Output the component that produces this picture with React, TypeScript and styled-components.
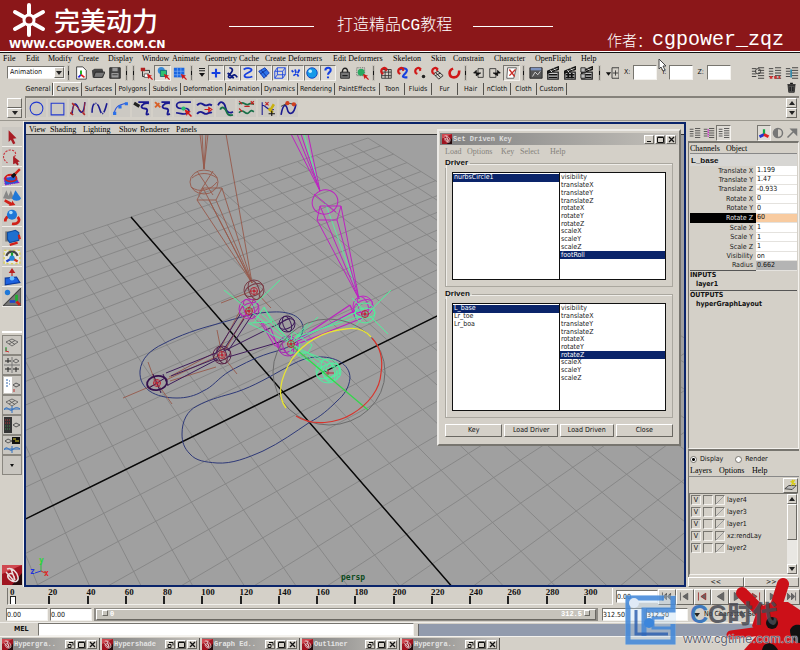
import React from "react";
import styled, { createGlobalStyle, css } from "styled-components";

const face = "#d4d0c8";
const navy = "#0a246a";
const ui = `"DejaVu Sans Condensed", "DejaVu Sans", "Liberation Sans", sans-serif`;
const serif = `"Liberation Serif", "DejaVu Serif", serif`;
const mono = `"Liberation Mono", monospace`;
const cjk = `"Noto Sans CJK SC", sans-serif`;

const Global = createGlobalStyle`
  * { box-sizing: border-box; }
  body { margin: 0; background: ${face}; }
  button, input, select { font: inherit; color: inherit; border-radius: 0; margin: 0; padding: 0; }
  svg { display: block; }
`;

const raised = css`
  border: 1px solid;
  border-color: #ffffff #6a6862 #6a6862 #ffffff;
`;
const sunken = css`
  border: 1px solid;
  border-color: #77756f #f4f2ee #f4f2ee #77756f;
`;

const Page = styled.div`
  position: relative;
  display: flex;
  flex-direction: column;
  height: 100vh;
  overflow: hidden;
  background: ${face};
  color: #111;
  font: 7px/9px ${ui};
`;

/* ---------- banner ---------- */
const Banner = styled.header`
  display: flex;
  align-items: center;
  height: 53px;
  flex: none;
  padding: 0 16px 0 9px;
  background: #8b1719;
  color: #fff;
  border-bottom: 1px solid #111;
  box-shadow: inset 0 -1px #fff;
`;
const Brand = styled.div`
  width: 156px;
  height: 50px;
`;
const BrandTop = styled.div`
  display: flex;
  align-items: center;
  gap: 8px;
  height: 38px;
  padding-left: 3px;
`;
const BrandName = styled.h1`
  margin: 0;
  font: 500 26px/32px ${cjk};
  white-space: nowrap;
`;
const BrandUrl = styled.div`
  font: 700 11px/11px "DejaVu Sans", sans-serif;
  white-space: nowrap;
`;
const Rule = styled.span<{ $w: number; $ml: number }>`
  height: 1px;
  width: ${(p) => p.$w}px;
  margin-left: ${(p) => p.$ml}px;
  background: #fff;
`;
const Slogan = styled.div`
  margin-left: 23px;
  font: 300 16px/20px "Liberation Mono", ${cjk};
  white-space: nowrap;
`;
const Author = styled.div`
  display: flex;
  align-items: center;
  align-self: flex-end;
  margin-left: auto;
  padding-bottom: 2px;
  font: 20px/20px ${mono};
  white-space: nowrap;
`;
const AuthorLabel = styled.span`
  font: 300 15px/20px ${cjk};
`;

/* ---------- menus and toolbars ---------- */
const MenuBar = styled.nav<{ $h?: number; $pl?: number; $faded?: boolean }>`
  display: flex;
  align-items: center;
  flex: none;
  height: ${(p) => p.$h ?? 11}px;
  padding-left: ${(p) => p.$pl ?? 3}px;
  font: 400 8px/9px ${serif};
  color: ${(p) => (p.$faded ? "#85827b" : "#000")};
`;
const MenuItem = styled.button<{ $w: number }>`
  flex: none;
  width: ${(p) => p.$w}px;
  border: 0;
  background: none;
  text-align: left;
  white-space: nowrap;
`;
const ToolBar = styled.div`
  display: flex;
  align-items: center;
  flex: none;
  height: 17px;
  padding: 0 0 0 7px;
`;
const Tool = styled.button<{ $on?: boolean; $w?: number }>`
  flex: none;
  display: grid;
  place-items: center;
  width: ${(p) => p.$w ?? 17}px;
  height: 16px;
  border: 0;
  background: none;
  ${(p) => p.$on && sunken}
  ${(p) => p.$on && "background: #dedbd5;"}
`;
const Divider = styled.span<{ $m?: number }>`
  flex: none;
  width: 1px;
  height: 14px;
  margin: 0 ${(p) => p.$m ?? 3}px;
  background: linear-gradient(#77756f 0 5px, #111 5px 9px, #77756f 9px);
  outline: 1px solid #c6c2ba;
`;
const SelectBox = styled.div`
  display: flex;
  width: 58px;
  height: 13px;
  ${sunken}
  background: #fff;
`;
const ModeSelect = styled.select`
  appearance: none;
  flex: 1;
  min-width: 0;
  padding-left: 2px;
  border: 0;
  background: none;
`;
const AxisLabel = styled.label`
  display: flex;
  align-items: center;
  gap: 3px;
  margin-left: 4px;
`;
const AxisInput = styled.input`
  width: 24px;
  height: 15px;
  ${sunken}
  background: #fff;
`;
const Push = styled.span`
  flex: 1;
`;

const ShelfTabs = styled.div`
  display: flex;
  flex: none;
  height: 15px;
  padding: 1px 3px 0 24px;
`;
const ShelfTab = styled.button<{ $w: number; $on?: boolean }>`
  flex: none;
  width: ${(p) => p.$w}px;
  height: ${(p) => (p.$on ? 14 : 12)}px;
  margin-top: ${(p) => (p.$on ? 0 : 1)}px;
  border: 0;
  border-right: 1px solid #55534e;
  background: ${face};
  white-space: nowrap;
  text-align: center;
  ${(p) => p.$on && "border-top: 1px solid #fff; border-left: 1px solid #fff;"}
`;
const Shelf = styled.div`
  display: flex;
  flex: none;
  height: 25px;
  padding: 0 1px 2px 7px;
  border-bottom: 1px solid #9a978f;
`;
const ShelfSide = styled.div`
  display: flex;
  flex-direction: column;
  justify-content: flex-end;
  width: 15px;
  margin-right: 3px;
`;
const MiniButton = styled.button<{ $h?: number; $w?: number }>`
  display: grid;
  place-items: center;
  flex: none;
  width: ${(p) => (p.$w ? p.$w + "px" : "100%")};
  height: ${(p) => p.$h ?? 10}px;
  ${raised}
  background: ${face};
`;
const ShelfBody = styled.div`
  display: flex;
  flex: 1;
  align-items: center;
  padding: 0 2px 0 0;
  border-top: 2px solid #85827b;
  border-left: 1px solid #85827b;
`;
const ShelfButton = styled.button`
  display: grid;
  place-items: center;
  flex: none;
  width: 21px;
  height: 20px;
  border: 1px solid ${face};
  background: #ccc9c3;
`;
const ScrollPair = styled.div`
  width: 11px;
  margin-left: auto;
`;

/* ---------- workspace ---------- */
const Workspace = styled.main`
  display: flex;
  flex: 1;
  min-height: 0;
`;
const ToolBox = styled.aside`
  display: flex;
  flex-direction: column;
  flex: none;
  width: 24px;
  padding: 6px 1px 2px 2px;
  border-right: 1px solid #f6f4f0;
`;
const BoxTool = styled.button`
  display: grid;
  place-items: center;
  flex: none;
  width: 20px;
  height: 20px;
  border: 0;
  border-bottom: 1px solid #f0eeea;
  background: #cbc8c2;
`;
const LayoutGroup = styled.div`
  margin-top: 24px;
  border-top: 2px solid #fff;
  padding-top: 2px;
`;
const LayoutButton = styled.button`
  display: grid;
  place-items: center;
  width: 20px;
  height: 20px;
  ${raised}
  background: #c9c6c0;
  outline: 1px solid #8a8780;
  outline-offset: -1px;
`;
const LogoSlot = styled.div`
  margin-top: auto;
`;
const ViewPanel = styled.section`
  position: relative;
  display: flex;
  flex-direction: column;
  flex: 1;
  min-width: 0;
  margin-top: 1px;
  border: 2px solid ${navy};
`;
const Scene = styled.div`
  flex: 1;
  min-height: 0;
  border-top: 1px solid #333;
  background: #a0a0a0;
  overflow: hidden;
`;

/* ---------- dialog ---------- */
const Dialog = styled.section`
  position: absolute;
  top: 5px;
  right: 3px;
  width: 244px;
  padding: 2px 6px 7px;
  ${raised}
  border-width: 2px;
  border-color: #eceae6 #77756f #77756f #eceae6;
  background: ${face};
`;
const TitleBar = styled.div`
  display: flex;
  align-items: center;
  gap: 1px;
  height: 12px;
  margin: 0 -5px;
  padding: 0 2px;
  background: linear-gradient(90deg, #808080, #c4c1bb);
  color: #dedede;
  font: 700 7px/10px ${mono};
`;
const TitleText = styled.span`
  flex: 1;
  overflow: hidden;
  white-space: nowrap;
`;
const WindowButton = styled.button`
  display: grid;
  place-items: center;
  flex: none;
  width: 10px;
  height: 9px;
  ${raised}
  background: ${face};
`;
const Group = styled.fieldset`
  margin: 0 0 2px;
  padding: 4px 6px 6px;
  border: 1px solid #aaa79f;
  box-shadow: inset 1px 1px #efede9;
`;
const Legend = styled.legend`
  margin-left: -7px;
  padding: 0 2px 0 0;
  font: 700 8px/10px "Liberation Sans", sans-serif;
`;
const Lists = styled.div`
  display: grid;
  grid-template-columns: 1fr 1fr;
  height: 108px;
  border: 1px solid #111;
  background: #fff;
`;
const List = styled.ul`
  display: grid;
  grid-template-rows: repeat(11, 1fr);
  height: 86px;
  margin: 0;
  padding: 1px 0 0;
  list-style: none;
`;
const ListCell = styled.div`
  & + & {
    border-left: 1px solid #111;
  }
`;
const ListRow = styled.li<{ $on?: boolean }>`
  display: flex;
  align-items: center;
  min-height: 0;
  padding-left: 1px;
  line-height: 7px;
  background: ${(p) => (p.$on ? navy : "#fff")};
  color: ${(p) => (p.$on ? "#fff" : "#222")};
`;
const DialogButtons = styled.div`
  display: flex;
  gap: 2px;
  margin-top: 6px;
`;
const PushButton = styled.button<{ $grow: number }>`
  flex: ${(p) => p.$grow} 1 0;
  height: 13px;
  ${raised}
  background: ${face};
  white-space: nowrap;
`;

/* ---------- channel box ---------- */
const Side = styled.aside`
  display: flex;
  flex-direction: column;
  flex: none;
  width: 114px;
  padding: 4px 1px 0 2px;
`;
const SideTools = styled.div`
  display: flex;
  height: 16px;
  flex: none;
`;
const ChannelPane = styled.div`
  flex: 1;
  ${sunken}
  border-top: 2px solid #77756f;
  padding: 0 1px;
`;
const NodeName = styled.h2`
  margin: 0;
  padding: 2px 1px 0;
  border-top: 1px solid #888;
  background: #d7d6d3;
  font: 700 8px/10px "Liberation Sans", sans-serif;
`;
const Channels = styled.table`
  width: 100%;
  height: 105px;
  border-collapse: collapse;
  border-bottom: 1px solid #555;
`;
const ChannelName = styled.th<{ $on?: boolean }>`
  padding: 0 3px 0 0;
  font-weight: 400;
  line-height: 8px;
  text-align: right;
  background: ${(p) => (p.$on ? "#000" : face)};
  color: ${(p) => (p.$on ? "#e4e4e4" : "#222")};
`;
const ChannelCell = styled.td<{ $bg: string }>`
  width: 41px;
  padding: 0 0 0 1px;
  background: ${(p) => p.$bg};
  border-bottom: 1px solid #e4e2de;
`;
const ChannelInput = styled.input`
  display: block;
  width: 100%;
  height: 8px;
  border: 0;
  background: none;
`;
const Connection = styled.div`
  height: 19px;
  font: 700 7px/9px ${ui};
  & + & {
    border-top: 1px solid #555;
  }
`;
const ConnectionNode = styled.div`
  padding-left: 6px;
`;
const LayerPane = styled.div`
  flex: none;
  height: 128px;
  border-top: 2px solid #77756f;
  border-left: 1px solid #77756f;
`;
const RadioRow = styled.div`
  display: flex;
  gap: 12px;
  height: 14px;
  padding: 3px 0 0 1px;
`;
const RadioLabel = styled.label`
  display: flex;
  align-items: center;
  gap: 3px;
`;
const Radio = styled.input`
  appearance: none;
  width: 7px;
  height: 7px;
  border: 1px solid #77756f;
  border-radius: 50% !important;
  background: #fff;
  &:checked {
    background: radial-gradient(#000 0 1px, #fff 2px);
  }
`;
const LayerTools = styled.div`
  display: flex;
  justify-content: flex-end;
  height: 17px;
  padding: 1px 1px 0 0;
  border-top: 1px solid #888;
`;
const LayerBody = styled.div`
  display: flex;
  height: 82px;
  margin-right: 1px;
  ${sunken}
`;
const LayerList = styled.ul`
  flex: 1;
  margin: 0;
  padding: 0 0 0 1px;
  list-style: none;
`;
const LayerRow = styled.li`
  display: flex;
  align-items: center;
  gap: 2px;
  height: 12px;
  white-space: nowrap;
`;
const Flag = styled.button<{ $slash?: boolean }>`
  width: 10px;
  height: 10px;
  ${sunken}
  background: ${(p) =>
    p.$slash ? "linear-gradient(135deg, #d4d0c8 46%, #999 48% 54%, #d4d0c8 56%)" : face};
  font-size: 7px;
  line-height: 7px;
`;
const Scroll = styled.div`
  display: flex;
  flex-direction: column;
  width: 10px;
  background: #e9e7e3;
`;
const ScrollThumb = styled.div`
  height: 36px;
  ${raised}
  background: ${face};
`;
const PageButtons = styled.div`
  display: grid;
  grid-template-columns: 1fr 1fr;
  flex: none;
  height: 10px;
`;

/* ---------- bottom bars ---------- */
const Timeline = styled.div`
  display: flex;
  flex: none;
  height: 20px;
  padding: 1px 0 2px 7px;
`;
const Ruler = styled.div`
  display: flex;
  flex: 1;
  padding-left: 2px;
  border-left: 1px solid #77756f;
  border-right: 1px solid #fff;
  border-bottom: 1px solid #f0eeea;
  overflow: hidden;
`;
const Tick = styled.div<{ $last?: boolean }>`
  flex: ${(p) => (p.$last ? "0 0 28px" : "1 1 0")};
  font: 700 9px/8px ${serif};
  &::after {
    content: "";
    display: block;
    width: 2px;
    height: 9px;
    background: #222;
  }
`;
const CurrentTime = styled(Tick)`
  &::after {
    width: 4px;
    height: 8px;
    border: 1px solid #222;
    background: #fff;
  }
`;
const Playback = styled.div`
  display: flex;
  align-items: center;
  width: 187px;
  flex: none;
  padding-left: 3px;
`;
const NumberInput = styled.input<{ $w: number }>`
  flex: none;
  width: ${(p) => p.$w}px;
  height: 13px;
  ${sunken}
  background: #fff;
`;
const PlayButton = styled.button`
  display: grid;
  place-items: center;
  flex: 1;
  height: 16px;
  ${raised}
  background: ${face};
`;
const RangeRow = styled.div`
  display: flex;
  align-items: center;
  flex: none;
  gap: 2px;
  height: 15px;
  padding: 0 0 0 6px;
`;
const RangeTrack = styled.div`
  display: flex;
  align-items: center;
  flex: 1;
  height: 13px;
  padding: 2px;
  background: #8e8b85;
  margin-right: 2px;
`;
const RangeBar = styled.div`
  display: flex;
  align-items: center;
  justify-content: space-between;
  flex: 1;
  height: 11px;
  padding: 0 3px;
  ${raised}
  background: #c6c3bb;
  color: #ffffff;
  font: 700 7px/9px ${mono};
`;
const Handle = styled.span`
  display: inline-block;
  width: 6px;
  height: 6px;
  margin: 0 2px;
  ${raised}
`;
const CharBox = styled.div`
  display: flex;
  align-items: center;
  gap: 4px;
  width: 110px;
  padding-left: 4px;
`;
const CharSelect = styled.select`
  appearance: none;
  flex: 1;
  height: 13px;
  border: 0;
  background: ${face};
`;
const CommandRow = styled.div`
  display: flex;
  align-items: center;
  flex: none;
  height: 14px;
  border-top: 1px solid #f0eeea;
`;
const CommandLabel = styled.label`
  width: 38px;
  flex: none;
  padding-left: 14px;
  font: 700 7px/9px ${ui};
`;
const CommandInput = styled.input`
  flex: 375 1 0;
  min-width: 0;
  height: 13px;
  ${sunken}
  background: #fff;
`;
const CommandResult = styled.output`
  flex: 383 1 0;
  height: 12px;
  margin-left: 4px;
  background: #929bad;
  border-left: 1px solid #666;
`;
const TaskBar = styled.div`
  display: flex;
  flex: none;
  gap: 2px;
  height: 14px;
  padding: 1px 0 0 2px;
  border-top: 1px solid #f4f2ee;
`;
const Task = styled.div`
  display: flex;
  align-items: center;
  gap: 1px;
  width: 98px;
  height: 12px;
  padding-right: 2px;
  border-right: 1px solid #55534e;
  background: linear-gradient(90deg, #808080, #c4c1bb);
  color: #e4e4e4;
  font: 700 7px/10px ${mono};
`;

/* ---------- overlays ---------- */
const Cursor = styled.div`
  position: absolute;
  left: 658px;
  top: 58px;
`;
const Watermark = styled.div`
  position: absolute;
  right: 0;
  bottom: 0;
  width: 176px;
  height: 76px;
  pointer-events: none;
`;
const MarkText = styled.div`
  position: absolute;
  left: 66px;
  top: 25px;
  font: 900 25px/30px "Liberation Sans", ${cjk};
  color: rgba(72, 74, 82, 0.85);
  white-space: nowrap;
`;
const MarkC = styled.span`
  color: #3f78bd;
`;
const MarkUrl = styled.div`
  position: absolute;
  left: 59px;
  top: 59px;
  font: 13px/12px "Liberation Sans", sans-serif;
  color: #5f626c;
  text-shadow: 0 0 1px #fff, 0 0 1px #fff;
  white-space: nowrap;
`;

/* ---------- icons ---------- */
type Draw = React.ReactNode;
const Icon = ({ children, s = 14, w }: { children: Draw; s?: number; w?: number }) => (
  <svg width={w ?? s} height={s} viewBox="0 0 16 16" fill="none" aria-hidden="true">
    {children}
  </svg>
);
const redArrow = <path d="M9 9l6 2-2 1 3 3-1 1-3-3-1 2z" fill="#d01818" />;
const magnet = <path d="M3 8C1 3 7 0 9 4M3 8l2 1M9 4L7 5" stroke="#d01818" strokeWidth="2.4" />;
const clapper = (
  <>
    <path d="M2 7h12v8H2z" fill="#c9c9c9" stroke="#222" strokeWidth="1.4" />
    <path d="M2 6L14 1v3L2 8zM3 10h10M3 13h10" stroke="#111" strokeWidth="1.6" />
    <path d="M5 5l2 2M9 3l2 2" stroke="#fff" />
  </>
);

const fileIcons: Draw[] = [
  <><path d="M3 1h7l4 4v10H3z" fill="#fff" stroke="#333" /><path d="M8 10V5" stroke="#0a0" strokeWidth="2" /><path d="M8 10l-3 3" stroke="#22d" strokeWidth="2" /><path d="M8 10l4 3" stroke="#d22" strokeWidth="2" /></>,
  <><path d="M1 5l3-2h9l1 3v7H2z" fill="#444" /><path d="M3 13l2-6h11l-3 6z" fill="#777" stroke="#222" /></>,
  <><path d="M2 2h12v12H2z" fill="#444" stroke="#222" /><path d="M5 2h6v4H5zM4 8h8v5H4z" fill="#999" /><path d="M5 10h6" stroke="#333" /></>,
];
const selectIcons: Draw[] = [
  <><path d="M2 2h5v4H2z" fill="#b02020" /><path d="M4 6v6h3M7 5h5v3" stroke="#222" /><path d="M6 9h5v4H6z" fill="#fff" stroke="#555" />{redArrow}</>,
  <><circle cx="6" cy="5" r="4" fill="#3a8ad8" /><path d="M5 5h7v7H5z" fill="#2fc070" stroke="#167" />{redArrow}</>,
  <><path d="M1 2h12v11H1z" fill="#1a66e0" /><path d="M5 2v11M9 2v11M1 6h12M1 10h12" stroke="#8ab8f8" strokeWidth=".7" />{redArrow}</>,
];
const maskIcons: Draw[] = [
  <path key="m" d="M8 3v10M3 8h10" stroke="#1540e0" strokeWidth="2.4" />,
  <path key="m" d="M5 2c6 1 3 5 0 8s1 5 3 2 4-2 6 1M3 8l7 6" stroke="#0a1a80" strokeWidth="2" />,
  <path key="m" d="M3 4c5-3 10-1 9 1S4 9 4 11s4 3 9 1" stroke="#1540e0" strokeWidth="2" />,
  <><path d="M2 6l7-4 5 6-6 6z" fill="#2d74ea" stroke="#1035b0" /><path d="M5 5l6 7M4 9l7-5" stroke="#0c2b90" /></>,
  <><path d="M2 6h9v8H2zM5 2h9v8H5zM2 6l3-4M11 6l3-4M11 14l3-4M2 14l3-4" stroke="#1540e0" /></>,
  <><path d="M3 5l2 2M7 4l1 4M12 4l-2 4M5 11l3-2M11 12L9 9" stroke="#1540e0" strokeWidth="2" /></>,
  <><circle cx="8" cy="8" r="6" fill="#159ae8" stroke="#0a3fc0" /><circle cx="6" cy="6" r="2" fill="#c0efff" /></>,
  <path key="m" d="M5 5c0-4 7-4 6 0 0 2-3 2-3 5M8 12v2" stroke="#1540e0" strokeWidth="2.4" />,
];
const snapIcons: Draw[] = [
  <><path d="M3 4h11v10H3zM7 4v10M11 4v10M3 7h11M3 11h11" stroke="#333" />{magnet}</>,
  <><path d="M4 4c6-3 11 0 7 4s-5 5 2 5" stroke="#1540e0" strokeWidth="2.4" />{magnet}</>,
  <>{magnet}<circle cx="12" cy="12" r="2" fill="#222" /></>,
  <><path d="M4 9l5-3 6 5-5 4zM7 8l5 5M6 11l6-3" stroke="#222" />{magnet}</>,
  <path key="m" d="M7 3C1 5 2 13 8 13c4 0 6-4 6-8" stroke="#d01818" strokeWidth="3" />,
];
const ioIcons: Draw[] = [
  <><path d="M8 3h6v10H8z" stroke="#333" /><path d="M11 8H3l3-3v6z" stroke="#111" fill="#111" /></>,
  <><path d="M2 3h7v10H2z" stroke="#333" /><path d="M6 8h8l-3-3v6z" stroke="#111" fill="#111" /></>,
];
const renderIcons: Draw[] = [
  <><path d="M1 2h14v12H1z" fill="#555" stroke="#222" /><path d="M2 2h12v3H2z" fill="#7c93c0" /><path d="M4 12l3-5 3 3 3-4" stroke="#ddd" /></>,
  clapper,
  <>{clapper}<path d="M6 8v6M10 8v6" stroke="#111" strokeWidth="2" /></>,
  <>{clapper}<path d="M1 2h5v5H1zM1 9h5v5H1z" fill="#bbb" stroke="#222" /></>,
];
const listLines = <path d="M1 3h5M1 6h5M1 9h5M1 12h5M8 2h7M8 5h7M8 8h7M8 11h7M8 14h7" stroke="#333" />;
const curve = "#1a1a90";
const shelfIcons: Draw[] = [
  <circle key="s" cx="8" cy="8" r="6" stroke="#2038d0" />,
  <path key="s" d="M2 3h12v11H2z" stroke="#2038d0" />,
  <><path d="M2 13C3 0 6 3 8 8s5 6 6-6" stroke={curve} strokeWidth="1.4" /><path d="M1 13l3-9 9 9 1-11" stroke="#b02828" strokeWidth=".8" /><path d="M2 3l2 2M12 12l2 2M0 12l3 2" stroke="#b02828" strokeWidth="1.6" /></>,
  <path key="s" d="M1 12C1 1 6 1 8 8s4 7 7-5" stroke={curve} strokeWidth="1.5" strokeDasharray="9 1 1 1" />,
  <><path d="M2 13c1-7 5-9 12-10" stroke="#2a50d8" /><path d="M1 11h3v3H1zM6 5h3v3H6zM12 2h3v3h-3z" fill="#2a70e8" /></>,
  <><path d="M1 3l5 3" stroke="#222" strokeWidth="3" /><path d="M5 2h10M15 3C9 2 5 8 11 8s-2 8 4 5" stroke={curve} strokeWidth="1.8" /></>,
  <><path d="M1 2l5 5M1 7l4-4" stroke="#d86028" strokeWidth="1.8" /><path d="M7 2h8M15 3C9 2 5 8 11 8s-2 8 4 5" stroke={curve} strokeWidth="1.8" /></>,
  <><path d="M15 2H6C0 2 0 8 6 8h5c4 1 2 6-4 5L1 12" stroke={curve} strokeWidth="1.6" /><circle cx="8" cy="8" r="2" fill="#26c070" />{redArrow}</>,
  <><path d="M1 5c4-5 6 1 9 0s3-1 5 0M1 13c4-5 6 1 9 0s3-2 5-1" stroke={curve} strokeWidth="1.8" /><path d="M8 9h5M12 7l3 2-3 2z" stroke="#d01818" /></>,
  <><path d="M1 5c2-5 6-3 7 2s4 6 7 4" stroke={curve} strokeWidth="1.6" /><path d="M3 9c2-4 5-1 6 2s3 4 6 3" stroke="#187048" strokeWidth="1.8" /></>,
  <><path d="M1 4c4-4 6 2 9 0s4 0 5 0M1 12c4-5 6 3 9 0s3-2 5-1" stroke="#187048" strokeWidth="1.6" /><path d="M1 1l3 3M12 1l3 3M12 4l3-3M1 8l3 3M6 6h5" stroke="#c02020" /></>,
  <><path d="M3 2v12M3 5c4 0 5 6 11 4" stroke={curve} /><path d="M6 2l3 3M9 2L6 5" stroke="#c02020" /><path d="M9 8l4 4M14 4l-3 5" stroke="#c8b010" strokeWidth="2.4" /><path d="M12 10v5M9 13h6" stroke="#111" /></>,
  <><path d="M1 14C3 2 6 4 7 9s6 6 8-5" stroke={curve} strokeWidth="1.5" /><path d="M1 6l6-3 8 1" stroke="#444" /><circle cx="7" cy="3" r="2" fill="#d04020" /><circle cx="13" cy="4" r="2" fill="#d04020" /></>,
];
const boxIcons: Draw[] = [
  <path key="b" d="M5 2l7 7-3 .5 2 4-2 1-2-4-2 2z" fill="#a81c24" />,
  <><path d="M10 8c4-5-3-8-7-5s-3 8 1 10" stroke="#c83840" strokeDasharray="2 1" /><path d="M9 7l6 5-2 .5 1 2-1 1-2-2-2 1z" fill="#a81c24" /></>,
  <><path d="M1 9l10-2 3 6-12 2z" fill="#1d5fd6" stroke="#a0c" strokeDasharray="1 1" /><ellipse cx="7" cy="9" rx="5" ry="3" stroke="#d02018" strokeWidth="1.6" /><path d="M8 8l3-3" stroke="#111" strokeWidth="3" /><path d="M11 5l4-4" stroke="#d02018" strokeWidth="2" /></>,
  <><path d="M0 9l3-7 3 8zM4 9l3-7 3 8z" fill="#888" /><path d="M8 9l3-7 5 7c-1 3-7 3-8 0z" fill="#1f78d8" /><path d="M2 10l6 3v-2l3 4-6 1 1-1-5-3z" fill="#d02018" /></>,
  <><path d="M2 12c0-3 2-5 4-4M13 8c3 3 0 7-5 6" stroke="#d02018" strokeWidth="2.4" /><circle cx="8" cy="6" r="4.5" fill="#1f78d8" /><circle cx="7" cy="4" r="1.6" fill="#a8dcff" /></>,
  <><path d="M2 3h9v9H2z" fill="#777" /><path d="M4 4l7-2 3 2v7l-8 2-2-3z" fill="#1f70d0" stroke="#124c9c" /><path d="M14 6l1 4M6 15l7-2" stroke="#d02018" strokeWidth="2" /></>,
  <><path d="M1 2h14v12H1z" fill="#e8e8e0" stroke="#d8cc30" strokeDasharray="2 2" /><path d="M3 7c2-5 8-5 10 0" stroke="#444" strokeWidth="2" /><path d="M8 4v5" stroke="#1aa030" strokeWidth="2" /><path d="M8 9l-5 3" stroke="#2040c8" strokeWidth="2" /><path d="M8 9l5 3" stroke="#c83020" strokeWidth="2" /><circle cx="8" cy="9" r="2.4" fill="#2888d8" /></>,
  <><path d="M2 9l10-1 3 5-13 2z" fill="#1d62e0" stroke="#0b3a9c" /><path d="M8 8V3M6 4l2-3 2 3z" stroke="#b82020" fill="#b82020" /><circle cx="8" cy="9" r="2" fill="#6cc0ff" /></>,
  <><path d="M0 16L16 0v16z" fill="#777" stroke="#444" /><circle cx="4" cy="4" r="2.4" fill="#1f78d8" /><path d="M12 12V6" stroke="#20b030" strokeWidth="2.4" /><path d="M11 12H6" stroke="#2048c8" strokeWidth="2.4" /><path d="M12 12l3 3" stroke="#d02018" strokeWidth="2.4" /></>,
];
const plane = (
  <path d="M2 5l6-3 6 3-6 4zM5 3.500l6 4M11 3.500L5 7" stroke="#555" strokeWidth=".8" />
);
const miniWave = <path d="M0 13c3-6 5 2 8 0s4-4 8-1M0 12h16M8 9v7" stroke="#3070c0" strokeWidth="1" />;
const layoutIcons: Draw[] = [
  <>{plane}<path d="M2 15v-4M2 14l3 1" stroke="#c33" /><path d="M2 14v-4" stroke="#1a4" /></>,
  <><path d="M8 0v16M0 8h16" stroke="#777" /><path d="M4 1v5M1 4h6M4 10v5M1 12h6M12 10v5M9 12h6" stroke="#222" /><path d="M9 4l3-2 3 2-3 2z" stroke="#666" /></>,
  <><path d="M0 0h8v16H0z" fill="#fff" /><path d="M2 3h2M2 6h2M2 9h2M5 4h1M5 7h1" stroke="#36a" /><path d="M9 8l3-2 4 2-4 2z" stroke="#555" /><path d="M10 15v-3" stroke="#b33" /></>,
  <>{plane}{miniWave}</>,
  <><path d="M0 0h8v16H0z" fill="#333" /><path d="M1 3h6M1 6h6" stroke="#b43c3c" strokeDasharray="1 1" /><path d="M1 9h6M1 12h6" stroke="#3b8a50" strokeDasharray="1 1" /><path d="M9 8l3-2 4 2-4 2z" stroke="#555" /></>,
  <><path d="M1 4l3-2 4 2-4 2z" stroke="#555" /><path d="M8 0h8v7H8z" fill="#111" /><path d="M9 2h3M11 4h4" stroke="#e0d030" />{miniWave}</>,
  <path key="l" d="M6 7h4l-2 3z" fill="#111" />,
];

const MayaMark = ({ s }: { s: number }) => (
  <svg width={s} height={s} viewBox="0 0 20 20" aria-hidden="true">
    <path d="M0 0h20v20H0z" fill="#a01420" />
    <path d="M0 0h20L0 9z" fill="#d04850" />
    <path d="M10 20L20 8v12z" fill="#260a0c" />
    <path d="M5 4c5-2 10 3 11 8s-3 5-6 4-6-5-3-7 6 2 5 5M4 7l8 9M9 4l4 11" fill="none" stroke="#eadede" strokeWidth="1.5" />
  </svg>
);

/* Perspective mapping of the 24 x 24 ground grid. */
const project = (u: number, w: number) => {
  const d = 1 + 0.01488 * u - 0.02137 * w;
  return [
    Math.round((10 * (25.226 * u + 6.619 * w + 131)) / d) / 10,
    Math.round((10 * (-4.545 * u + 6.228 * w + 216)) / d) / 10,
  ];
};
const seg = (a: number[], b: number[]) => `M${a[0]} ${a[1]}L${b[0]} ${b[1]}`;
const steps = Array.from({ length: 25 }, (_, i) => i);
const gridPath = steps
  .map((i) => seg(project(i - 12, 0), project(i - 12, 24)) + seg(project(-12, i), project(12, i)))
  .join("");
const axisPath = seg(project(0, 0), project(0, 24)) + seg(project(-12, 12), project(12, 12));

const Joint = ({ x, y, r, color }: { x: number; y: number; r: number; color: string }) => (
  <g stroke={color}>
    <circle cx={x} cy={y} r={r} />
    <ellipse cx={x} cy={y} rx={r} ry={r * 0.55} transform={`rotate(-25 ${x} ${y})`} />
    <ellipse cx={x} cy={y} rx={r * 0.5} ry={r} transform={`rotate(-20 ${x} ${y})`} />
  </g>
);
const Core = ({ x, y }: { x: number; y: number }) => (
  <g stroke="#b82838">
    <circle cx={x} cy={y} r="3.500" />
    <path d={`M${x - 4} ${y}h8M${x} ${y - 4}v8`} strokeWidth=".7" />
    <circle cx={x} cy={y} r="1" fill="#d02030" />
  </g>
);

const SceneDrawing = () => (
  <svg width="100%" height="100%" viewBox="26 134 659 450" preserveAspectRatio="xMinYMin slice" fill="none" role="img" aria-label="persp">
    <path d={gridPath} stroke="#848484" strokeWidth=".9" />
    <path d={axisPath} stroke="#080808" strokeWidth="1.500" />
    <g stroke="#2e3978">
      <path d="M140 370C141 358 150 349 163 343C180 334 198 328 217 323C238 317 256 311 273 311C292 310 304 317 303 329C301 341 290 346 277 350C258 355 245 362 230 370C218 377 213 386 203 390C195 395 186 397 177 397C155 397 139 388 140 370Z" />
      <path d="M182 433C182 420 187 410 197 405C208 399 219 396 230 393C248 388 264 379 280 370C293 363 304 356 317 356C335 355 350 363 350 377C349 387 344 394 337 400C329 408 320 416 310 421C295 431 280 442 263 450C247 457 232 463 217 462C205 461 196 460 190 453C184 447 182 441 182 433Z" />
    </g>
    <g stroke="#96594b" strokeWidth=".9">
      <path d="M200 133l4 35M202 133l2 35M206 133l-2 35M208 133l-4 35M226 133L252 282" />
      <ellipse cx="204" cy="181" rx="14" ry="12" />
      <path d="M192 177c7-6 17-6 25 0M191 186c8 6 19 4 26-5M197 170l16 24M213 170l-14 22" />
      <path d="M203 187h19l-6 12-19 0zM197 199L252 282M203 187L252 282M222 187L252 282M216 199L252 282M209 199L252 282" />
      <path d="M221 302l31-12M254 289l17 18M217 329l5 25 15 19M123 397l33-14-8-22M157 382l15 21" />
      <path d="M244 302L219 350M247 312L224 350M254 298L226 348M169 376l45-24M170 380l46-14M166 379l54-25" />
    </g>
    <g strokeWidth="1">
      <Joint x={254} y={289} r={10} color="#7a3c46" />
      <Joint x={222} y={354} r={9} color="#5b2548" />
      <path d="M241 312L216 352M244 318L224 348M252 314L228 350M166 372l50-20M168 384l50-26M171 375l46-18M163 373l5 12M222 351l68-34M228 356l62-18" stroke="#3e1c5a" />
      <ellipse cx="157" cy="382" rx="10" ry="7" stroke="#340f4c" strokeWidth="1.800" transform="rotate(-10 157 382)" />
      <path d="M153 373l8 19M149 387l16-10" stroke="#340f4c" />
      <Joint x={287} y={323} r={8} color="#3e1c5a" />
      <Core x={254} y={290} />
      <Core x={222} y={354} />
      <Core x={157} y={382} />
    </g>
    <path d="M304 133L320 190M325 201L360 298" stroke="#5ce8a0" />
    <g stroke="#bd22c0">
      <path d="M291 133L320 190M297 133L320 190M301 133L320 190M308 133L320 190" />
      <ellipse cx="325" cy="201" rx="13" ry="12" transform="rotate(-25 325 201)" />
      <path d="M314 193l22 18M320 205h21l-4 14h-20zM317 219L359 298M320 205L359 298M341 205L359 298M337 219L359 298" />
      <path d="M350 304l-54 36M356 309l-58 31M350 304l6 14M295 344l70-28" strokeWidth="1.300" />
      <path d="M260 320l14 24 12 6M262 321l18 26M270 325l8 22" />
    </g>
    <Joint x={363} y={305} r={10} color="#c028c4" />
    <Joint x={249} y={308} r={10} color="#b428b4" />
    <Joint x={288} y={345} r={10} color="#a82ab4" />
    <g stroke="#4ff09a">
      <circle cx="365" cy="312" r="10" />
      <ellipse cx="365" cy="312" rx="10" ry="5" />
      <path d="M224 289l25 20 31-30M352 297l36 36M352 328l39-39M249 309l42 33M254 322l10-16 8 15-22 1M264 307l26 35M248 322l42 20M291 342l27-26M291 342l72-34M296 336l68-22M262 313l30 28M291 342l36 28M308 322l-17 20" />
      <path d="M292 330l20 14-4 8-18 0zM300 342l-2 12 24 14M292 343l34 20M304 350l24 10" />
    </g>
    <Joint x={328} y={370} r={12} color="#52eda0" />
    <Joint x={332} y={371} r={9} color="#52eda0" />
    <path d="M291 344L368 409" stroke="#32d848" strokeWidth="1.200" />
    <ellipse cx="329" cy="371" rx="56" ry="53" stroke="#6c6c6c" />
    <path d="M286 407C276 394 281 376 292 358C304 341 324 330 345 328C356 326 365 329 371 336" stroke="#e8e433" strokeWidth="1.300" />
    <path d="M372 337C381 347 383 360 381 372C380 388 369 403 352 413C337 422 313 426 296 415" stroke="#d8342c" strokeWidth="1.200" />
    <Core x={365} y={313} />
    <Core x={249} y={310} />
    <Core x={291} y={343} />
    <path d="M326 372h8M328 374v-6" stroke="#b82838" />
    <path d="M41 570v-8" stroke="#30b840" />
    <path d="M41 570l-6 2" stroke="#2838d8" />
    <path d="M41 570l4 2" stroke="#d02828" />
    <g fontFamily="DejaVu Sans Mono, monospace" fontWeight="700" fontSize="8">
      <text x="39" y="562" fill="#28d838">y</text>
      <text x="30" y="573" fill="#2030e0">z</text>
      <text x="44" y="575" fill="#e02020">x</text>
      <text x="341" y="579" fill="#0b4a1c">persp</text>
    </g>
  </svg>
);

/* ---------- data ---------- */
const mainMenu: [string, number][] = [
  ["File", 23], ["Edit", 22], ["Modify", 30], ["Create", 30], ["Display", 34], ["Window", 30],
  ["Animate", 33], ["Geometry Cache", 60], ["Create Deformers", 68], ["Edit Deformers", 60],
  ["Skeleton", 38], ["Skin", 22], ["Constrain", 41], ["Character", 41], ["OpenFlight", 46], ["Help", 22],
];
const viewMenu: [string, number][] = [
  ["View", 21], ["Shading", 33], ["Lighting", 36], ["Show", 21], ["Renderer", 36], ["Panels", 30],
];
const dialogMenu: [string, number][] = [["Load", 22], ["Options", 34], ["Key", 19], ["Select", 30], ["Help", 22]];
const tabs: [string, number][] = [
  ["General", 29], ["Curves", 29], ["Surfaces", 34], ["Polygons", 34], ["Subdivs", 31], ["Deformation", 45],
  ["Animation", 36], ["Dynamics", 36], ["Rendering", 37], ["PaintEffects", 45], ["Toon", 25], ["Fluids", 27],
  ["Fur", 26], ["Hair", 26], ["nCloth", 27], ["Cloth", 26], ["Custom", 30],
];
const attrs = ["visibility", "translateX", "translateY", "translateZ", "rotateX", "rotateY", "rotateZ", "scaleX", "scaleY", "scaleZ"];
const channels: [string, string][] = [
  ["Translate X", "1.199"], ["Translate Y", "1.47"], ["Translate Z", "-0.933"], ["Rotate X", "0"], ["Rotate Y", "0"],
  ["Rotate Z", "60"], ["Scale X", "1"], ["Scale Y", "1"], ["Scale Z", "1"], ["Visibility", "on"], ["Radius", "0.662"],
];
const channelColor = (name: string) =>
  name === "Rotate Z" ? "#f8cba0" : name === "Radius" ? "#b4b4b4" : "#fff";
const playShapes = [
  "M3 3v10M8 4L4 8l4 4zM13 4L9 8l4 4z",
  "M3 3v10M12 4L6 8l6 4z",
  "M3 3v10M12 4L6 8l6 4z",
  "M12 3L4 8l8 5z",
  "M4 3l8 5-8 5z",
  "M4 4l6 4-6 4zM13 3v10",
  "M4 4l6 4-6 4zM13 3v10",
  "M3 4l4 4-4 4zM8 4l4 4-4 4zM13 3v10",
];

const Menu = ({ items }: { items: [string, number][] }) => (
  <>
    {items.map(([t, w]) => (
      <MenuItem key={t} $w={w}>{t}</MenuItem>
    ))}
  </>
);
const Tools = ({ icons, name, on, w }: { icons: Draw[]; name: string; on?: number | "all"; w?: number }) => (
  <>
    {icons.map((d, i) => (
      <Tool key={i} $w={w} $on={on === "all" || on === i} aria-label={`${name} ${i + 1}`}>
        <Icon>{d}</Icon>
      </Tool>
    ))}
  </>
);
const Arrow = ({ up }: { up?: boolean }) => (
  <svg width="6" height="4" viewBox="0 0 6 4" aria-hidden="true">
    <path d={up ? "M0 4h6L3 0z" : "M0 0h6L3 4z"} fill="#222" />
  </svg>
);
const WindowButtons = ({ restore }: { restore?: boolean }) => (
  <>
    {["min", "max", "close"].map((k) => (
      <WindowButton key={k} aria-label={k}>
        <svg width="7" height="7" viewBox="0 0 7 7" fill="none" stroke="#111" aria-hidden="true">
          {k === "min" && (restore ? <path d="M2 1.500h4v3M1 3.500h3v3H1z" /> : <path d="M1 5.500h4" />)}
          {k === "max" && <path d="M.5 1.500h6v5h-6zM.5 1h6" />}
          {k === "close" && <path d="M1 1l5 5M6 1L1 6" strokeWidth="1.300" />}
        </svg>
      </WindowButton>
    ))}
  </>
);
const Pick = ({ title, nodes, node, items, item }: { title: string; nodes: string[]; node: string; items: string[]; item: string }) => (
  <Group>
    <Legend>{title}</Legend>
    <Lists>
      {[{ all: nodes, on: node }, { all: items, on: item }].map(({ all, on }) => (
        <ListCell key={on}>
          <List>
            {all.map((n) => (
              <ListRow key={n} $on={n === on}>{n}</ListRow>
            ))}
          </List>
        </ListCell>
      ))}
    </Lists>
  </Group>
);

export default function App() {
  return (
    <Page>
      <Global />
      <Banner>
        <Brand>
          <BrandTop>
            <svg width="34" height="36" viewBox="0 0 34 36" fill="none" stroke="#fff" strokeWidth="4" strokeLinecap="round" aria-hidden="true">
              <path d="M17 3v9M17 24v9M3 10l9 5M31 10l-9 5M3 27l9-5M31 27l-9-5" />
              <circle cx="17" cy="18" r="5" strokeWidth="3" />
            </svg>
            <BrandName>完美动力</BrandName>
          </BrandTop>
          <BrandUrl>WWW.CGPOWER.COM.CN</BrandUrl>
        </Brand>
        <Rule $w={85} $ml={64} />
        <Slogan>打造精品CG教程</Slogan>
        <Rule $w={80} $ml={21} />
        <Author>
          <AuthorLabel>作者：</AuthorLabel>cgpower_zqz
        </Author>
      </Banner>

      <MenuBar><Menu items={mainMenu} /></MenuBar>

      <ToolBar>
        <SelectBox>
          <ModeSelect aria-label="Menu set"><option>Animation</option></ModeSelect>
          <MiniButton $w={10} $h={11} aria-label="Open menu set"><Arrow /></MiniButton>
        </SelectBox>
        <Divider />
        <Tools icons={fileIcons} name="File" />
        <Divider /><Divider />
        <Tools icons={selectIcons} name="Select by" on={1} />
        <Divider />
        <Tool $w={13} aria-label="Selection mask"><Icon s={12}><path d="M4 2h8M4 5h8" stroke="#222" strokeWidth="1.600" /><path d="M4 8h8l-4 5z" fill="#111" /></Icon></Tool>
        <Tools icons={maskIcons} name="Mask" on="all" w={16} />
        <Tool aria-label="Lock selection"><Icon><path d="M3 7h10v7H3z" fill="#777" stroke="#222" /><path d="M5 7c0-6 6-6 6 0M5 11h6" stroke="#222" strokeWidth="1.600" /></Icon></Tool>
        <Tool aria-label="Highlight selection"><Icon><path d="M2 2h9v9H2z" stroke="#555" strokeDasharray="1 1" /><circle cx="7" cy="7" r="4" fill="#2aa860" />{redArrow}</Icon></Tool>
        <Divider />
        <Tools icons={snapIcons} name="Snap" />
        <Divider />
        <Tools icons={ioIcons} name="Connections" />
        <Tool $on aria-label="Construction history"><Icon><path d="M3 2h10l-3 12H2z" fill="#fff" stroke="#555" /><path d="M12 4l-7 7M5 4l6 8" stroke="#c83028" strokeWidth="1.600" /></Icon></Tool>
        <Divider />
        <Tools icons={renderIcons} name="Render" />
        <Divider $m={4} />
        <Tool $w={16} aria-label="Input mode"><Icon><path d="M1 7h6l-3 4z" fill="#111" /><path d="M8 2h8v12H8zM12 5v6M9 8h6" stroke="#333" /></Icon></Tool>
        {["X:", "Y:", "Z:"].map((a) => (
          <AxisLabel key={a}>{a}<AxisInput /></AxisLabel>
        ))}
        <Push />
        <Tool aria-label="Attribute editor"><Icon>{listLines}<circle cx="8" cy="6" r="3" stroke="#333" /></Icon></Tool>
        <Tool aria-label="Tool settings"><Icon>{listLines}<path d="M2 13h12" stroke="#c33" strokeWidth="3" strokeDasharray="3 2" /></Icon></Tool>
        <Tool aria-label="Channel box"><Icon>{listLines}<path d="M7 4v9" stroke="#38a" strokeWidth="2" /></Icon></Tool>
      </ToolBar>

      <ShelfTabs>
        {tabs.map(([t, w]) => (
          <ShelfTab key={t} $w={w} $on={t === "Curves"}>{t}</ShelfTab>
        ))}
        <Push />
        <Icon s={11}><path d="M3 5h10l-1 10H4z" fill="#555" stroke="#111" /><path d="M2 4h12M6 2h4M6 7v6M10 7v6" stroke="#111" strokeWidth="1.600" /></Icon>
      </ShelfTabs>
      <Shelf>
        <ShelfSide>
          <MiniButton $h={10} aria-label="Shelf tab" />
          <MiniButton $h={10} aria-label="Shelf menu"><Arrow /></MiniButton>
        </ShelfSide>
        <ShelfBody>
          {shelfIcons.map((d, i) => (
            <ShelfButton key={i} aria-label={`Curve tool ${i + 1}`}><Icon s={17}>{d}</Icon></ShelfButton>
          ))}
          <ScrollPair>
            <MiniButton aria-label="Scroll up"><Arrow up /></MiniButton>
            <MiniButton aria-label="Scroll down"><Arrow /></MiniButton>
          </ScrollPair>
        </ShelfBody>
      </Shelf>

      <Workspace>
        <ToolBox>
          {boxIcons.map((d, i) => (
            <BoxTool key={i} aria-label={`Tool ${i + 1}`}><Icon s={18}>{d}</Icon></BoxTool>
          ))}
          <LayoutGroup>
            {layoutIcons.map((d, i) => (
              <LayoutButton key={i} aria-label={`Layout ${i + 1}`}><Icon s={16}>{d}</Icon></LayoutButton>
            ))}
          </LayoutGroup>
          <LogoSlot><MayaMark s={20} /></LogoSlot>
        </ToolBox>

        <ViewPanel>
          <MenuBar $h={10}><Menu items={viewMenu} /></MenuBar>
          <Scene><SceneDrawing /></Scene>
          <Dialog aria-label="Set Driven Key">
            <TitleBar>
              <MayaMark s={10} />
              <TitleText>Set Driven Key</TitleText>
              <WindowButtons />
            </TitleBar>
            <MenuBar $h={13} $pl={0} $faded><Menu items={dialogMenu} /></MenuBar>
            <Pick title="Driver" nodes={["nurbsCircle1"]} node="nurbsCircle1" items={[...attrs, "footRoll"]} item="footRoll" />
            <Pick title="Driven" nodes={["L_base", "Lr_toe", "Lr_boa"]} node="L_base" items={attrs} item="rotateZ" />
            <DialogButtons>
              <PushButton $grow={58}>Key</PushButton>
              <PushButton $grow={54}>Load Driver</PushButton>
              <PushButton $grow={54}>Load Driven</PushButton>
              <PushButton $grow={58}>Close</PushButton>
            </DialogButtons>
          </Dialog>
        </ViewPanel>

        <Side>
          <SideTools>
            <Tool $w={14} aria-label="Names left"><Icon s={12}>{listLines}</Icon></Tool>
            <Tool $w={14} aria-label="Names both"><Icon s={12}>{listLines}<path d="M7 3v10" stroke="#c3c" strokeWidth="2" strokeDasharray="2 1" /></Icon></Tool>
            <Tool $w={15} $on aria-label="Names right"><Icon s={12}>{listLines}</Icon></Tool>
            <Push />
            <Tool $w={14} $on aria-label="Manipulators"><Icon s={12}><path d="M8 10V3" stroke="#1a4" strokeWidth="3" /><path d="M8 10l-6 3" stroke="#23c" strokeWidth="4" /><path d="M8 10l6 3" stroke="#d22" strokeWidth="4" /></Icon></Tool>
            <Tool $w={14} aria-label="Speed"><Icon s={12}><circle cx="8" cy="8" r="6" stroke="#777" strokeWidth="2" /><path d="M8 2a6 6 0 000 12z" fill="#777" /></Icon></Tool>
            <Tool $w={14} aria-label="Hyperbolic"><Icon s={12}><path d="M2 14L13 3M7 3h7v7z" stroke="#777" strokeWidth="2" fill="#777" /></Icon></Tool>
          </SideTools>
          <ChannelPane>
            <MenuBar $h={10} $pl={0}><Menu items={[["Channels", 36], ["Object", 30]]} /></MenuBar>
            <NodeName>L_base</NodeName>
            <Channels>
              <tbody>
                {channels.map(([n, v]) => (
                  <tr key={n}>
                    <ChannelName scope="row" $on={n === "Rotate Z"}>{n}</ChannelName>
                    <ChannelCell $bg={channelColor(n)}><ChannelInput aria-label={n} defaultValue={v} /></ChannelCell>
                  </tr>
                ))}
              </tbody>
            </Channels>
            <Connection>INPUTS<ConnectionNode>layer1</ConnectionNode></Connection>
            <Connection>OUTPUTS<ConnectionNode>hyperGraphLayout</ConnectionNode></Connection>
          </ChannelPane>
          <LayerPane>
            <RadioRow>
              <RadioLabel><Radio type="radio" name="layers" defaultChecked />Display</RadioLabel>
              <RadioLabel><Radio type="radio" name="layers" />Render</RadioLabel>
            </RadioRow>
            <MenuBar $h={11} $pl={1}><Menu items={[["Layers", 29], ["Options", 33], ["Help", 20]]} /></MenuBar>
            <LayerTools>
              <MiniButton $w={15} $h={15} aria-label="New layer"><Icon s={13}><path d="M1 12l5-4h9l-5 5z" stroke="#333" fill="#bbb" /><path d="M8 3l6 3M13 1l-4 7M10 1l3 7" stroke="#d8cc18" strokeWidth="1.600" /></Icon></MiniButton>
            </LayerTools>
            <LayerBody>
              <LayerList>
                {["layer4", "layer3", "layer1", "xz:rendLay", "layer2"].map((l) => (
                  <LayerRow key={l}>
                    <Flag aria-label={`${l} visible`}>V</Flag>
                    <Flag aria-label={`${l} type`} />
                    <Flag $slash aria-label={`${l} colour`} />
                    {l}
                  </LayerRow>
                ))}
              </LayerList>
              <Scroll>
                <MiniButton aria-label="Up"><Arrow up /></MiniButton>
                <ScrollThumb />
                <Push />
                <MiniButton aria-label="Down"><Arrow /></MiniButton>
              </Scroll>
            </LayerBody>
          </LayerPane>
          <PageButtons>
            <MiniButton aria-label="Previous">&lt;&lt;</MiniButton>
            <MiniButton aria-label="Next">&gt;&gt;</MiniButton>
          </PageButtons>
        </Side>
      </Workspace>

      <Timeline>
        <Ruler>
          <CurrentTime>0</CurrentTime>
          {Array.from({ length: 15 }, (_, i) => (
            <Tick key={i} $last={i === 14}>{(i + 1) * 20}</Tick>
          ))}
        </Ruler>
        <Playback>
          <NumberInput $w={42} aria-label="Current time" defaultValue="0.00" />
          {playShapes.map((d, i) => (
            <PlayButton key={i} aria-label={`Playback ${i + 1}`}>
              <Icon s={13}><path d={d} fill="#666" stroke={i === 2 || i === 5 ? "#922" : "#555"} /></Icon>
            </PlayButton>
          ))}
        </Playback>
      </Timeline>
      <RangeRow>
        <NumberInput $w={42} aria-label="Start" defaultValue="0.00" />
        <NumberInput $w={42} aria-label="Range start" defaultValue="0.00" />
        <RangeTrack>
          <RangeBar><span><Handle />0</span><span>312.5<Handle /></span></RangeBar>
        </RangeTrack>
        <NumberInput $w={42} aria-label="Range end" defaultValue="312.50" />
        <NumberInput $w={42} aria-label="End" defaultValue="312.50" />
        <CharBox>
          <Arrow />
          <CharSelect aria-label="Character set"><option>No Character Set</option></CharSelect>
        </CharBox>
      </RangeRow>
      <CommandRow>
        <CommandLabel htmlFor="mel">MEL</CommandLabel>
        <CommandInput id="mel" />
        <CommandResult />
      </CommandRow>
      <TaskBar>
        {["Hypergra..", "Hypershade", "Graph Ed..", "Outliner", "Hypergra.. "].map((t) => (
          <Task key={t}>
            <MayaMark s={11} />
            <TitleText>{t}</TitleText>
            <WindowButtons restore />
          </Task>
        ))}
      </TaskBar>

      <Cursor>
        <svg width="10" height="14" viewBox="0 0 10 14" aria-hidden="true">
          <path d="M1 1v10l2-2 2 4 2-1-2-4h3z" fill="#fff" stroke="#444" />
        </svg>
      </Cursor>
      <Watermark>
        <svg width="176" height="76" viewBox="0 0 176 76" fill="none" aria-hidden="true">
          <path d="M1 21h51v50H1z" fill="#b8d6f2" fillOpacity=".35" />
          <g stroke="#3f86d8" strokeOpacity=".85" strokeWidth="5">
            <path d="M40 24H4v44h45V50M20 62V36h29V22" />
            <path d="M12 36v24h32" strokeWidth="3" stroke="#2f62b0" />
            <path d="M40 44H29v10h18" strokeWidth="3" />
          </g>
          <circle cx="25" cy="49" r="5" fill="#3b86dc" />
          <circle cx="10" cy="29" r="5" fill="#dfeaf6" />
          <g stroke="#cc1018" strokeWidth="12" strokeLinecap="round">
            <path d="M118 19l24 24M159 10l-10 32" />
            <path d="M107 61l30-4" strokeWidth="9" />
          </g>
          <path d="M134 34l14-6h16l12 8v40h-56l14-16-6-8z" fill="#cc1018" />
          <circle cx="148" cy="49" r="6" fill="#111" />
          <path d="M166 56c2-5 6-6 10-5v18c-6 0-10-6-10-13zM138 76c2-10 12-8 16 0z" fill="#111" />
        </svg>
        <MarkText><MarkC>C</MarkC>G时代</MarkText>
        <MarkUrl>www.cgtime.com.cn</MarkUrl>
      </Watermark>
    </Page>
  );
}
